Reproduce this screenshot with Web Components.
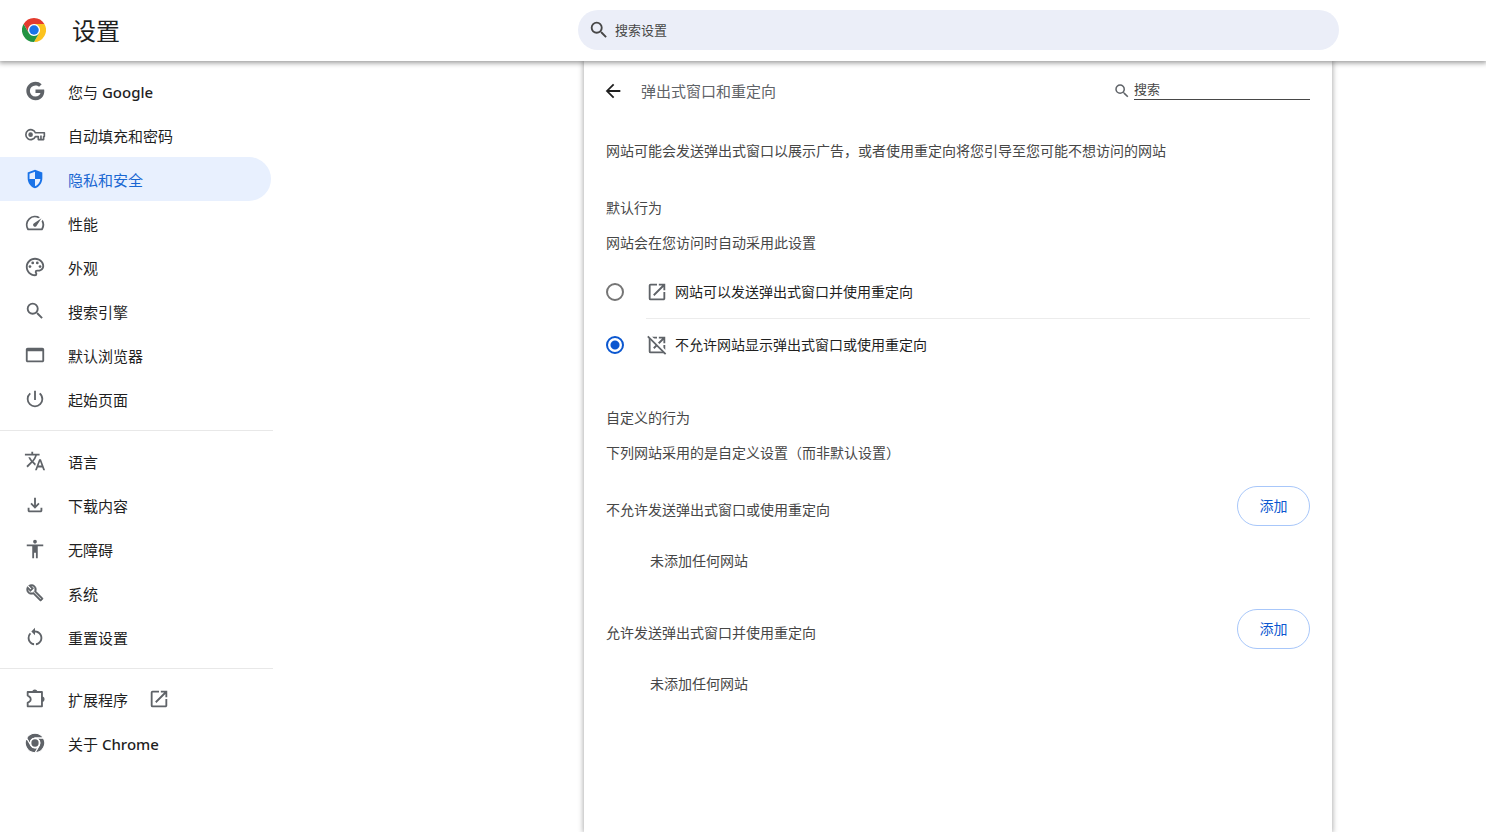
<!DOCTYPE html>
<html lang="zh-CN">
<head>
<meta charset="utf-8">
<title>设置</title>
<style>
  html { height: 100%; }
  body {
    margin: 0;
    min-height: 100%;
    display: flex;
    background: #fff;
    color: #1f1f1f;
    font-family: "Noto Sans", "Noto Sans CJK SC", sans-serif;
    font-size: 14px;
    line-height: 20px;
  }
</style>
</head>
<body>
<settings-app></settings-app>

<script>
const OPEN_NEW = 'M19 19H5V5h7V3H5a2 2 0 0 0-2 2v14a2 2 0 0 0 2 2h14c1.1 0 2-.9 2-2v-7h-2v7zM14 3v2h3.59l-9.83 9.83 1.41 1.41L19 6.41V10h2V3h-7z';
const WHEEL = [
  'M24,12H44.7812a23.9939,23.9939,0,0,0-41.5639.0029L13.6079,30l.0093-.0024A11.9852,11.9852,0,0,1,24,12Z',
  'M34.3913,30.0029,24.0007,48A23.994,23.994,0,0,0,44.78,12.0031H23.9989l-.0025.0093A11.985,11.985,0,0,1,34.3913,30.0029Z',
  'M13.6086,30.0031,3.218,12.006A23.994,23.994,0,0,0,24.0025,48L34.3931,30.0029l-.0067-.0068a11.9852,11.9852,0,0,1-20.7778.007Z'
];
const p = d => `<path d="${d}"/>`;
const ICONS = {
  google: p('M12.545 10.239v3.821h5.445c-.712 2.315-2.647 3.972-5.445 3.972a6.033 6.033 0 1 1 0-12.064c1.498 0 2.866.549 3.921 1.453l2.814-2.814A9.969 9.969 0 0 0 12.545 2C7.021 2 2.543 6.477 2.543 12s4.478 10 10.002 10c8.396 0 10.249-7.85 9.426-11.748z'),
  key: '<path d="M12.4 9.9A5.4 5.4 0 1 0 12.4 14.1H15.6V17.4H21.4V14.1H22.2V9.9Z" transform="translate(0 -.4)" fill="none" stroke="currentColor" stroke-width="1.8" stroke-linejoin="round"/><path d="M17.6 17V12.6h1.8V17z"/><circle cx="7.2" cy="11.6" r="2.5"/>',
  shield: '<path fill-rule="evenodd" d="M12 2 4 5v6.09c0 5.05 3.41 9.76 8 10.91 4.59-1.15 8-5.86 8-10.91V5zM12 12h5.9c-.4 3.8-2.8 7-5.9 7.9zH6V6.4l6-2.3z"/>',
  speed: p('M20.38 8.57l-1.23 1.85a8 8 0 0 1-.22 7.58H5.07A8 8 0 0 1 15.58 6.85l1.85-1.23A10 10 0 0 0 3.35 19a2 2 0 0 0 1.72 1h13.85a2 2 0 0 0 1.74-1 10 10 0 0 0-.27-10.44zm-9.79 6.84a2 2 0 0 0 2.83 0l5.66-8.49-8.49 5.66a2 2 0 0 0 0 2.83z'),
  palette: p('M12 22C6.49 22 2 17.51 2 12S6.49 2 12 2s10 4.04 10 9c0 3.31-2.69 6-6 6h-1.77c-.28 0-.5.22-.5.5 0 .12.05.23.13.33.41.47.64 1.06.64 1.67A2.5 2.5 0 0 1 12 22zm0-18c-4.41 0-8 3.59-8 8s3.59 8 8 8c.28 0 .5-.22.5-.5a.54.54 0 0 0-.14-.35c-.41-.46-.63-1.05-.63-1.65a2.5 2.5 0 0 1 2.5-2.5H16c2.21 0 4-1.79 4-4 0-3.86-3.59-7-8-7z') +
    '<circle cx="6.5" cy="11.5" r="1.5"/><circle cx="9.5" cy="7.5" r="1.5"/><circle cx="14.5" cy="7.5" r="1.5"/><circle cx="17.5" cy="11.5" r="1.5"/>',
  search: p('M15.5 14h-.79l-.28-.27A6.471 6.471 0 0 0 16 9.5 6.5 6.5 0 1 0 9.5 16c1.61 0 3.09-.59 4.23-1.57l.27.28v.79l5 4.99L20.49 19l-4.99-5zm-6 0C7.01 14 5 11.99 5 9.5S7.01 5 9.5 5 14 7.01 14 9.5 11.99 14 9.5 14z'),
  browser: p('M20 4H4c-1.11 0-2 .9-2 2v12c0 1.1.89 2 2 2h16c1.1 0 2-.9 2-2V6c0-1.1-.9-2-2-2zm0 14H4V8h16v10z'),
  power: p('M13 3h-2v10h2V3zm4.83 2.17l-1.42 1.42A6.92 6.92 0 0 1 19 12c0 3.87-3.13 7-7 7s-7-3.13-7-7c0-2.2 1.02-4.16 2.58-5.42L6.17 5.17A8.93 8.93 0 0 0 3 12a9 9 0 0 0 18 0c0-2.74-1.23-5.18-3.17-6.83z'),
  translate: p('M12.87 15.07l-2.54-2.51.03-.03A17.52 17.52 0 0 0 14.07 6H17V4h-7V2H8v2H1v1.99h11.17C11.5 7.92 10.44 9.75 9 11.35 8.07 10.32 7.3 9.19 6.69 8h-2c.73 1.63 1.73 3.17 2.98 4.56l-5.09 5.02L4 19l5-5 3.11 3.11.76-2.04zM18.5 10h-2L12 22h2l1.12-3h4.75L21 22h2l-4.5-12zm-2.62 7l1.62-4.33L19.12 17h-3.24z'),
  download: p('M12 16l-5-5 1.4-1.45 2.6 2.6V4h2v8.15l2.6-2.6L17 11l-5 5zm-6 4c-.55 0-1.02-.2-1.41-.59A1.93 1.93 0 0 1 4 18v-3h2v3h12v-3h2v3c0 .55-.2 1.02-.59 1.41-.39.39-.86.59-1.41.59H6z'),
  accessibility: p('M12 2c1.1 0 2 .9 2 2s-.9 2-2 2-2-.9-2-2 .9-2 2-2zm9 7h-6v13h-2v-6h-2v6H9V9H3V7h18v2z'),
  wrench: '<g transform="translate(2 2) scale(.82)" stroke="currentColor" stroke-width=".7">' + p('M22.61 18.99l-9.08-9.08c.93-2.34.45-5.1-1.44-7C9.79.61 6.21.4 3.66 2.26L7.5 6.11 6.08 7.52 2.25 3.69C.39 6.23.6 9.82 2.9 12.11c1.86 1.86 4.57 2.35 6.89 1.48l9.11 9.11c.39.39 1.02.39 1.41 0l2.3-2.3c.4-.38.4-1.01 0-1.41zm-3 1.6l-9.46-9.46c-.61.45-1.29.72-2 .82-1.36.2-2.79-.21-3.83-1.25C3.37 9.76 2.93 8.5 3 7.26l3.09 3.09 4.24-4.24-3.09-3.09c1.24-.07 2.49.37 3.44 1.31a4.469 4.469 0 0 1 1.24 3.96 4.35 4.35 0 0 1-.77 1.96l9.45 9.45-.99.89z') + '</g>',
  reset: p('M12 5V2L8 6l4 4V7c3.31 0 6 2.69 6 6 0 2.97-2.17 5.43-5 5.91v2.02c3.95-.49 7-3.85 7-7.93 0-4.42-3.58-8-8-8zm-6 8c0-1.65.67-3.15 1.76-4.24L6.34 7.34A8.014 8.014 0 0 0 4 13c0 4.08 3.05 7.44 7 7.93v-2.02c-2.83-.48-5-2.94-5-5.91z'),
  puzzle: '<path d="M4 4.4H19.6V20H4V16.2L5.8 15A3.3 3.3 0 0 0 5.8 9.4L4 8.2Z" fill="none" stroke="currentColor" stroke-width="2" stroke-linejoin="round"/><path d="M9 4.4a2.8 2.8 0 0 1 5.6 0zM19.6 9.4a2.8 2.8 0 0 1 0 5.6z"/>',
  chrome: '<g transform="translate(1.4 1.4) scale(.4417)">' + WHEEL.map(d => `<path d="${d}" stroke="#fff" stroke-width="2.6"/>`).join('') + '<circle cx="24" cy="24" r="13" fill="#fff"/><circle cx="24" cy="24" r="9"/></g>',
  external: p(OPEN_NEW),
  blocked: '<mask id="cut"><path d="M0 0h24v24H0z" fill="#fff"/><path d="M1 -.2 24 22.8" stroke="#000" stroke-width="3.6"/></mask><path mask="url(#cut)" d="' + OPEN_NEW + '"/><path d="M2 2.6 21.4 22" fill="none" stroke="currentColor" stroke-width="1.9"/>',
  back: p('M20 11H7.83l5.59-5.59L12 4l-8 8 8 8 1.41-1.41L7.83 13H20v-2z'),
  logo: '<g transform="scale(.5)"><circle cx="24" cy="24" r="12" fill="#fff"/>' + ['#e33b2e', '#fcc31e', '#229342'].map((c, i) => `<path fill="${c}" d="${WHEEL[i]}"/>`).join('') + '<circle cx="24" cy="24" r="9.5" fill="#1a73e8"/></g>'
};

const define = (name, html, setup) => {
  const template = document.createElement('template');
  template.innerHTML = html;
  customElements.define(name, class extends HTMLElement {
    constructor() {
      super();
      this.attachShadow({ mode: 'open' }).append(template.content.cloneNode(true));
    }
    connectedCallback() { if (setup) setup(this, this.shadowRoot); }
  });
};

define('ui-icon', `
  <style>
    :host { display: block; flex: none; width: var(--icon-size, 22px); height: var(--icon-size, 22px); }
    svg { display: block; width: 100%; height: 100%; fill: currentColor; }
  </style>
  <svg viewBox="0 0 24 24" aria-hidden="true"></svg>`,
  (el, root) => { root.querySelector('svg').innerHTML = ICONS[el.getAttribute('name')]; });

define('settings-toolbar', `
  <style>
    :host {
      display: grid;
      grid-template-columns: minmax(180px, 578fr) minmax(0, 761px) 147fr;
      align-items: center;
      height: 60px;
      padding-bottom: 1px;
      background: #fff;
      position: relative;
      z-index: 1;
      box-shadow: 0 1px 5px 1px rgba(0, 0, 0, .4);
    }
    .brand { display: flex; align-items: center; gap: 26px; padding-left: 22px; --icon-size: 24px; }
    h1 { margin: 0; padding-top: 2px; font-size: 24px; line-height: 32px; font-weight: 400; }
    label {
      display: flex; align-items: center; gap: 5px;
      box-sizing: border-box; height: 40px; padding: 0 20px 0 10px;
      border-radius: 20px; background: #ebeef8; color: #474747;
    }
    input {
      flex: 1; min-width: 0; padding: 0; border: 0; outline: 0; background: none;
      color: #474747; font: inherit; font-size: 13px;
    }
    input::placeholder { color: #474747; opacity: 1; }
  </style>
  <div class="brand"><ui-icon name="logo"></ui-icon><h1>设置</h1></div>
  <label><ui-icon name="search"></ui-icon><input type="text" placeholder="搜索设置" aria-label="搜索设置"></label>`);

define('menu-item', `
  <style>
    :host { display: block; margin-right: 2px; }
    a {
      display: flex; align-items: center; height: 44px; padding-left: 24px;
      border-radius: 0 22px 22px 0; color: #1f1f1f; text-decoration: none;
      font-size: 15px; line-height: 20px;
    }
    ui-icon { color: #5f6368; }
    .text { padding-top: 2px; margin: 0 20px 0 22px; }
    ::slotted(b) { font-weight: 500; }
    :host([selected]) a { background: #e8f0fe; color: #1967d2; }
    :host([selected]) ui-icon { color: #1a73e8; }
    .external { display: none; }
    :host([external]) .external { display: block; }
  </style>
  <a href="#"><ui-icon class="lead"></ui-icon><span class="text"><slot></slot></span><ui-icon class="external" name="external"></ui-icon></a>`,
  (el, root) => {
    const lead = root.querySelector('.lead');
    const link = root.querySelector('a');
    lead.setAttribute('name', el.getAttribute('icon'));
    link.href = '#' + el.getAttribute('icon');
    if (el.hasAttribute('selected')) link.setAttribute('aria-current', 'page');
    lead.shadowRoot.querySelector('svg').innerHTML = ICONS[lead.getAttribute('name')];
  });

define('settings-menu', `
  <style>
    :host { display: block; width: 273px; padding-top: 8px; }
    hr { margin: 9px 0 8px; border: 0; height: 1px; background: #e8e8e8; }
  </style>
  <nav aria-label="设置">
    <menu-item icon="google">您与 <b>Google</b></menu-item>
    <menu-item icon="key">自动填充和密码</menu-item>
    <menu-item icon="shield" selected>隐私和安全</menu-item>
    <menu-item icon="speed">性能</menu-item>
    <menu-item icon="palette">外观</menu-item>
    <menu-item icon="search">搜索引擎</menu-item>
    <menu-item icon="browser">默认浏览器</menu-item>
    <menu-item icon="power">起始页面</menu-item>
    <hr>
    <menu-item icon="translate">语言</menu-item>
    <menu-item icon="download">下载内容</menu-item>
    <menu-item icon="accessibility">无障碍</menu-item>
    <menu-item icon="wrench">系统</menu-item>
    <menu-item icon="reset">重置设置</menu-item>
    <hr>
    <menu-item icon="puzzle" external>扩展程序</menu-item>
    <menu-item icon="chrome">关于 <b>Chrome</b></menu-item>
  </nav>`);

define('page-header', `
  <style>
    :host { display: flex; align-items: center; height: 60px; padding-left: 18px; padding-right: 22px; }
    button { padding: 0; border: 0; background: none; color: #1f1f1f; }
    h2 { flex: 1; margin: 0 0 0 17px; font-size: 15px; line-height: 20px; font-weight: 400; color: #5f6368; }
    label { display: flex; align-items: center; gap: 3px; color: #5f6368; --icon-size: 18px; }
    input {
      box-sizing: border-box; width: 176px; height: 22px; margin-bottom: 4px; padding: 0; border: 0; border-bottom: 1px solid #474747;
      border-radius: 0; outline: 0; background: none; color: #474747; font: inherit; font-size: 13px;
    }
    input::placeholder { color: #474747; opacity: 1; }
  </style>
  <button type="button" aria-label="返回"><ui-icon name="back"></ui-icon></button>
  <h2><slot></slot></h2>
  <label><ui-icon name="search"></ui-icon><input type="text" placeholder="搜索" aria-label="搜索"></label>`);

define('section-intro', `
  <style>
    :host { display: block; margin: 37px 22px 0; }
    h3, p { margin: 0; font-size: 14px; line-height: 20px; font-weight: 400; }
    p { margin-top: 15px; }
  </style>
  <h3><slot name="title"></slot></h3>
  <p><slot></slot></p>`);

define('popup-choice', `
  <style>
    :host { display: block; margin: 13px 22px 0; }
    fieldset { margin: 0; padding: 0; border: 0; min-width: 0; }
    label { display: flex; align-items: center; height: 52px; color: #1f1f1f; }
    input {
      appearance: none; flex: none; box-sizing: border-box; width: 18px; height: 18px;
      margin: 0 22px 0 0; border: 2px solid #757575; border-radius: 50%;
    }
    input:checked { border-color: #0b57d0; background: radial-gradient(circle, #0b57d0 4px, transparent 5px); }
    ui-icon { margin-right: 7px; color: #5f6368; }
    hr { margin: 0 0 0 40px; border: 0; height: 1px; background: #ececec; }
  </style>
  <fieldset aria-label="默认行为">
    <label for="allow"><input type="radio" name="popups" id="allow"><ui-icon name="external"></ui-icon>网站可以发送弹出式窗口并使用重定向</label>
    <hr>
    <label for="block"><input type="radio" name="popups" id="block" checked><ui-icon name="blocked"></ui-icon>不允许网站显示弹出式窗口或使用重定向</label>
  </fieldset>`);

define('site-list', `
  <style>
    :host { display: block; margin: 23px 22px 0; }
    header { display: flex; justify-content: space-between; align-items: center; }
    h3 { margin: 0; padding-top: 8px; font-size: 14px; line-height: 20px; font-weight: 400; }
    button {
      width: 73px; height: 40px; padding: 0; border: 1px solid #a8c7fa; border-radius: 20px;
      background: #fff; color: #0b57d0; font: inherit;
    }
    p { margin: 25px 0 0 44px; }
  </style>
  <header><h3><slot></slot></h3><button type="button">添加</button></header>
  <p>未添加任何网站</p>`);

define('popups-page', `
  <style>
    :host { display: block; background: #fff; color: #474747; box-shadow: 0 0 5px 1px rgba(0, 0, 0, .3); }
    .summary { margin: 20px 22px 0; }
    .next { margin-top: 38px; }
  </style>
  <page-header>弹出式窗口和重定向</page-header>
  <p class="summary">网站可能会发送弹出式窗口以展示广告，或者使用重定向将您引导至您可能不想访问的网站</p>
  <section-intro><span slot="title">默认行为</span>网站会在您访问时自动采用此设置</section-intro>
  <popup-choice></popup-choice>
  <section-intro><span slot="title">自定义的行为</span>下列网站采用的是自定义设置（而非默认设置）</section-intro>
  <site-list>不允许发送弹出式窗口或使用重定向</site-list>
  <site-list class="next">允许发送弹出式窗口并使用重定向</site-list>`);

define('settings-app', `
  <style>
    :host { display: flex; flex-direction: column; flex: 1; min-width: 0; }
    main {
      flex: 1; display: grid; overflow: hidden;
      grid-template-columns: minmax(273px, 584fr) minmax(0, 748px) 154fr;
    }
  </style>
  <settings-toolbar></settings-toolbar>
  <main>
    <settings-menu></settings-menu>
    <popups-page></popups-page>
  </main>`);
</script>
</body>
</html>
